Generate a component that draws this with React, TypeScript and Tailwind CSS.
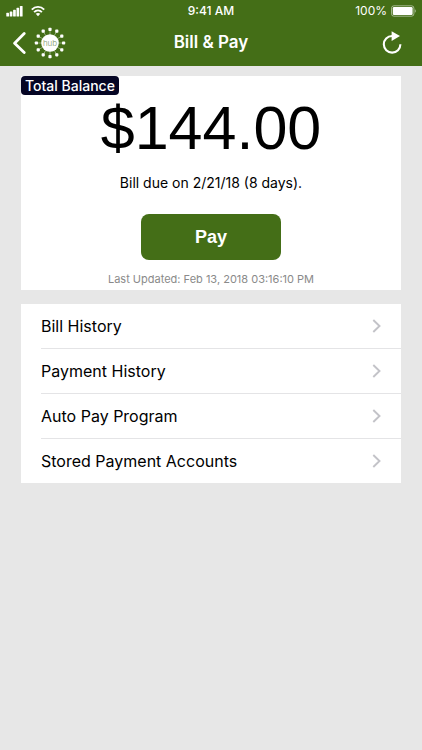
import React from 'react';

const menuItems = ['Bill History', 'Payment History', 'Auto Pay Program', 'Stored Payment Accounts'];

const dots = [0, 30, 60, 90, 120, 150, 180, 210, 240, 270, 300, 330].map((deg) => {
  const rad = (deg * Math.PI) / 180;
  return { deg, x: 16 + 13.6 * Math.cos(rad), y: 16 + 13.6 * Math.sin(rad) };
});

const StatusBar: React.FC = () => {
  return (
    <div className="grid grid-cols-3 items-center h-5 px-1.5 pt-0.5 text-xs">
      <div className="flex items-center gap-2">
        <svg width="17" height="12" viewBox="0 0 17 12" fill="currentColor" aria-hidden="true">
          <rect x="0.3" y="7.8" width="2.7" height="3.7" rx="0.6" />
          <rect x="3.7" y="6.5" width="2.7" height="5" rx="0.6" />
          <rect x="7.1" y="4.8" width="2.7" height="6.7" rx="0.6" />
          <rect x="10.5" y="2.8" width="2.7" height="8.7" rx="0.6" />
          <rect x="13.9" y="1" width="2.7" height="10.5" rx="0.6" />
        </svg>
        <svg width="14" height="12" viewBox="0 0 14 12" fill="none" stroke="currentColor" strokeWidth="1.9" aria-hidden="true">
          <path d="M0.8 4.6 C4.3 0.9 9.7 0.9 13.2 4.6" />
          <path d="M3.1 7.1 C5.3 4.9 8.7 4.9 10.9 7.1" />
          <path d="M7 11.2 L4.7 8.8 C6 7.6 8 7.6 9.3 8.8 Z" fill="currentColor" stroke="none" />
        </svg>
      </div>
      <span className="text-center font-medium">9:41 AM</span>
      <div className="flex items-center justify-end gap-1">
        <span>100%</span>
        <svg width="25" height="12" viewBox="0 0 25 12" aria-hidden="true">
          <rect x="0.5" y="0.8" width="22.4" height="10.4" rx="2.4" fill="none" stroke="currentColor" strokeOpacity="0.5" />
          <rect x="1.8" y="2.1" width="19.8" height="7.8" rx="1.2" fill="currentColor" />
          <path d="M23.8 4.2 C25.2 4.7 25.2 7.3 23.8 7.8 Z" fill="currentColor" fillOpacity="0.5" />
        </svg>
      </div>
    </div>
  );
};

const HubLogo: React.FC = () => {
  return (
    <svg width="32" height="32" viewBox="0 0 32 32" aria-hidden="true">
      {dots.map(({ deg, x, y }) => (
        <g key={deg}>
          <line x1="16" y1="16" x2={x} y2={y} stroke="white" strokeWidth="0.6" strokeOpacity="0.7" />
          <rect x={x - 1.6} y={y - 1.6} width="3.2" height="3.2" rx="0.8" fill="white" />
        </g>
      ))}
      <circle cx="16" cy="16" r="8.8" fill="white" />
      <text x="16" y="18.8" textAnchor="middle" fontSize="8" fill="#82996a" className="font-light">hub</text>
    </svg>
  );
};

const Header: React.FC = () => {
  return (
    <header className="bg-[#446e17] text-white">
      <StatusBar />
      <div className="grid grid-cols-3 items-center h-[46px] px-3">
        <button type="button" aria-label="Back" className="flex items-center gap-2 justify-self-start">
          <svg width="14" height="24" viewBox="0 0 14 24" fill="none" stroke="white" strokeWidth="2.8" strokeLinecap="round" strokeLinejoin="round" aria-hidden="true">
            <path d="M12.2 2.6 L2.6 12.2 L12.2 21.6" />
          </svg>
          <HubLogo />
        </button>
        <h1 className="text-center text-[17px] font-semibold">Bill &amp; Pay</h1>
        <button type="button" aria-label="Refresh" className="justify-self-end pr-2">
          <svg width="20" height="24" viewBox="0 0 20 24" aria-hidden="true">
            <path d="M10 5 A8.3 8.3 0 1 0 18.4 13.3" fill="none" stroke="white" strokeWidth="2.1" />
            <path d="M9.6 0.2 L18 5 L9.6 10 Z" fill="white" />
          </svg>
        </button>
      </div>
    </header>
  );
};

const BalanceCard: React.FC = () => {
  return (
    <section className="flex flex-col items-center bg-white">
      <h2 className="self-start h-[19px] px-1 rounded bg-[#050524] text-sm leading-[19px] font-medium text-white">
        Total Balance
      </h2>
      <p className="font-['Liberation_Sans',Arial,sans-serif] text-[61px] leading-[66px]">$144.00</p>
      <p className="mt-3 text-sm leading-5">Bill due on 2/21/18 (8 days).</p>
      <button
        type="button"
        className="mt-[21px] w-[140px] h-[46px] rounded-lg bg-[#446e17] font-['Liberation_Sans',Arial,sans-serif] text-lg font-bold text-white"
      >
        Pay
      </button>
      <p className="mt-[11px] pb-[3px] text-[11px] leading-4 text-[#8a8a8a]">Last Updated: Feb 13, 2018 03:16:10 PM</p>
    </section>
  );
};

const Menu: React.FC = () => {
  return (
    <nav className="mt-3.5 bg-white">
      <ul className="pl-5">
        {menuItems.map((item) => (
          <li key={item} className="border-b border-[#e4e4e6] last:border-b-0">
            <a href="#" className="flex items-center justify-between h-11 pr-5 text-base">
              {item}
              <svg width="9" height="14" viewBox="0 0 9 14" fill="none" stroke="#c3c3c8" strokeWidth="1.9" aria-hidden="true">
                <path d="M1.3 1 L7.5 7 L1.3 13" />
              </svg>
            </a>
          </li>
        ))}
      </ul>
    </nav>
  );
};

const App: React.FC = () => {
  return (
    <div className="min-h-screen bg-[#e7e7e7] font-['Inter',sans-serif] text-black">
      <Header />
      <main className="px-[21px] pt-2.5">
        <BalanceCard />
        <Menu />
      </main>
    </div>
  );
};

export default App;
